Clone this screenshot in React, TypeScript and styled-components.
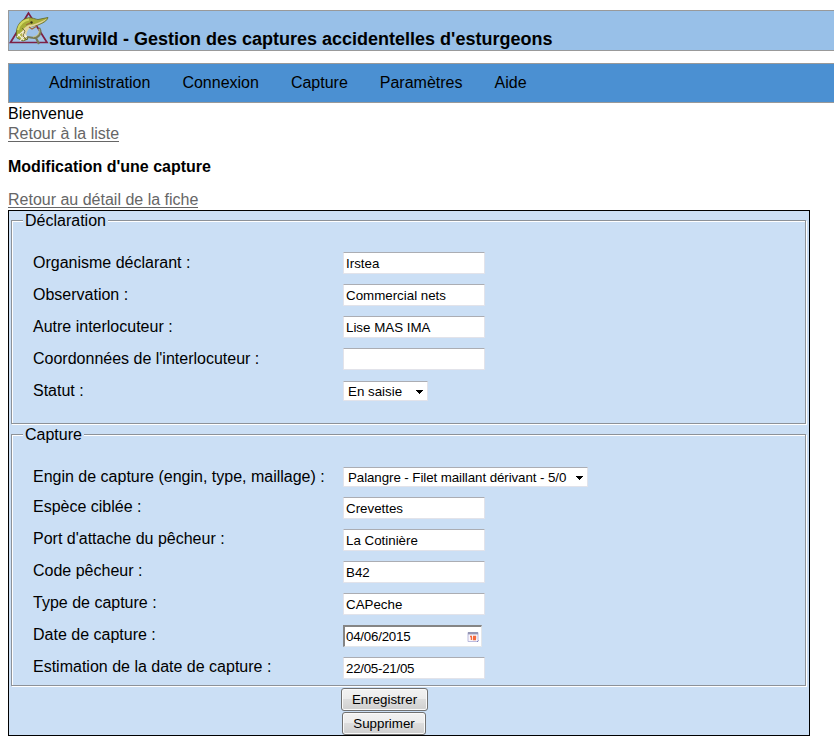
import React from "react";
import styled, { createGlobalStyle } from "styled-components";

const GlobalStyle = createGlobalStyle`
  * { box-sizing: border-box; }
  html, body { margin: 0; padding: 0; background: #fff; overflow: hidden; }
  body { font-family: "Liberation Sans", Arial, sans-serif; font-size: 16px; line-height: 20px; color: #000; }
`;

const Page = styled.div`
  display: flex;
  flex-direction: column;
  padding: 10px 0 0 8px;
`;

const Header = styled.header`
  display: flex;
  align-items: flex-start;
  height: 41px;
  background: #98c0e8;
  border: 1px solid #999;
  border-right: 0;
`;

const Logo = styled.svg`
  display: block;
  width: 40px;
  height: 35px;
  flex: none;
`;

const Title = styled.h1`
  margin: 17px 0 0;
  font-size: 18px;
  line-height: 22px;
  font-weight: bold;
  white-space: nowrap;
`;

const Menu = styled.nav`
  display: flex;
  gap: 32px;
  height: 40px;
  margin-top: 12px;
  padding: 9px 0 0 40px;
  background: #4b90d2;
  border: 1px solid #999;
  border-right: 0;
`;

const MenuItem = styled.span`
  white-space: nowrap;
`;

const Welcome = styled.div`
  margin-top: 1px;
`;

const BackLink = styled.a`
  align-self: flex-start;
  height: 18px;
  line-height: 20px;
  color: #666;
  border-bottom: 1px solid #666;
`;

const PageTitle = styled.h2`
  margin: 15px 0 13px;
  font-size: 16px;
  line-height: 20px;
  font-weight: bold;
`;

const FormBox = styled.form`
  display: flex;
  flex-direction: column;
  width: 802px;
  height: 526px;
  margin-top: 2px;
  padding: 9px 3px 0 2px;
  background: #cbdff5;
  border: 1px solid #000;
`;

const Section = styled.section<{ $height: number; $lift: number }>`
  height: ${(p) => p.$height}px;
  width: 795px;
  margin-bottom: 10px;
  padding-left: 11px;
  border: 1px solid #8d9298;
  box-shadow: 1px 1px 0 #fff, inset 1px 1px 0 #fff;
  --lift: ${(p) => p.$lift}px;
`;

const Legend = styled.div`
  width: fit-content;
  height: 20px;
  margin: -10px 0 0;
  padding: 0 2px;
  background: #cbdff5;
`;

const Fields = styled.div<{ $top: number }>`
  padding: ${(p) => p.$top}px 0 0 10px;
`;

const Row = styled.div<{ $height?: number }>`
  display: grid;
  grid-template-columns: 310px auto;
  align-items: center;
  justify-content: start;
  height: ${(p) => p.$height ?? 32}px;
`;

const Label = styled.label<{ $level?: boolean }>`
  white-space: nowrap;
  margin-bottom: ${(p) => (p.$level ? "0" : "var(--lift)")};
`;

const Input = styled.input<{ $tight?: boolean }>`
  width: 142px;
  height: 22px;
  padding: 1px 2px 0;
  font: 13.333px "Liberation Sans", Arial, sans-serif;
  letter-spacing: ${(p) => (p.$tight ? "-0.27px" : "normal")};
  color: #000;
  background: #fff;
  border: 1px solid #e2e3ea;
  border-top-color: #abadb3;
  border-radius: 1px;
  outline: none;
`;

const DateBox = styled.div`
  display: flex;
  align-items: center;
  justify-content: space-between;
  width: 139px;
  height: 22px;
  padding: 0 2px 0 1px;
  font-size: 13.333px;
  letter-spacing: -0.23px;
  background: #fff;
  border: 2px solid #e2e6ea;
  border-width: 2px 1px 1px 2px;
  border-top-color: #858585;
  border-left-color: #858585;
`;

const Select = styled.div<{ $width: number }>`
  display: flex;
  align-items: center;
  justify-content: space-between;
  width: ${(p) => p.$width}px;
  height: 20px;
  padding: 1px 4px 0;
  font-size: 13.333px;
  letter-spacing: ${(p) => (p.$width > 100 ? "-0.08px" : "normal")};
  white-space: nowrap;
  background: #fff;
  border: 1px solid #e2e3ea;
  border-top-color: #abadb3;
  border-radius: 1px;
`;

const Actions = styled.div`
  display: flex;
  flex-direction: column;
  align-items: flex-start;
  gap: 1px;
  margin-top: -8px;
  padding-left: 330px;
`;

const Button = styled.button<{ $width: number; $indent?: number }>`
  width: ${(p) => p.$width}px;
  height: 23px;
  margin-left: ${(p) => p.$indent ?? 0}px;
  padding: 0;
  font: 13.333px "Liberation Sans", Arial, sans-serif;
  color: #000;
  background: linear-gradient(#f2f2f2 0%, #ebebeb 49%, #dddddd 50%, #cfcfcf 100%);
  border: 1px solid #707070;
  border-radius: 3px;
  box-shadow: inset 0 0 0 1px #fafafa;
`;

const Arrow = () => (
  <svg width="7" height="4" viewBox="0 0 7 4" shapeRendering="crispEdges">
    <path d="M0 0H7V1H6V2H5V3H4V4H3V3H2V2H1V1H0Z" fill="#000" />
  </svg>
);

const Calendar = () => (
  <svg width="12" height="12" viewBox="0 0 12 12">
    <path d="M1 1.5H11V10.5H1Z" fill="#f8f5fb" stroke="#b4b4da" strokeWidth="0.9" />
    <path d="M1 1H11V3.4H1Z" fill="#9496b4" />
    <path d="M3 5.5H4.4V9M6 5.5H8.5V7H6.5V8.5H9" fill="none" stroke="#f46a3c" strokeWidth="1.3" />
    <path d="M10 11L11.5 9.5" stroke="#8080bd" />
  </svg>
);

const SturgeonLogo = () => (
  <Logo viewBox="0 0 40 35">
    <path d="M19.5 2L1.5 31.5H38Z" fill="#a0c2e6" stroke="#7d2045" strokeWidth="1.7" />
    <path d="M8 27C6 19 9 11 16 8C21 5 25 8 29 8.5L39 6.5C38 10 34 12 29 14C25 15 21 15 18 18C15 22 16 25 19 28L14 30Z" fill="#a7ad38" stroke="#5d6425" strokeWidth="0.8" />
    <path d="M20 14C25 14 32 11 38 7.5C35 11.5 28 14 22 16C18 19 16 24 18 28L13 26C12 20 15 16 20 14Z" fill="#e2d49c" />
    <path d="M9 19C10 13 15 9 20 8.5" fill="none" stroke="#d2d860" strokeWidth="2.2" />
    <path d="M8 26C11 23 13 20 16 20M11 30C15 24 18 25 21 27M9 23L15 29M13 21L18 26" fill="none" stroke="#f5efd8" strokeWidth="1.1" />
    <path d="M13 17L16 20L14 25L18 29" fill="none" stroke="#625c32" strokeWidth="0.8" />
    <path d="M30 17C33 21 31 26 25 27L18 26M27 27L30 33" fill="none" stroke="#777a55" strokeWidth="2.2" />
    <path d="M30 18C31 22 29 25 24 26" fill="none" stroke="#cfc47d" strokeWidth="1" />
    <circle cx="22.5" cy="11.5" r="1.2" fill="#353515" />
    <path d="M17 14L21 12M20 16L23 18L28 15" fill="none" stroke="#9c683a" strokeWidth="1.2" />
  </Logo>
);

type Field = {
  label: string;
  value: string;
  kind?: "select" | "date";
  width?: number;
  height?: number;
  level?: boolean;
  tight?: boolean;
};

const declaration: Field[] = [
  { label: "Organisme déclarant :", value: "Irstea" },
  { label: "Observation :", value: "Commercial nets" },
  { label: "Autre interlocuteur :", value: "Lise MAS IMA" },
  { label: "Coordonnées de l'interlocuteur :", value: "" },
  { label: "Statut :", value: "En saisie", kind: "select", width: 85 },
];

const capture: Field[] = [
  { label: "Engin de capture (engin, type, maillage) :", value: "Palangre - Filet maillant dérivant - 5/0", kind: "select", width: 245, height: 30, level: true },
  { label: "Espèce ciblée :", value: "Crevettes" },
  { label: "Port d'attache du pêcheur :", value: "La Cotinière" },
  { label: "Code pêcheur :", value: "B42" },
  { label: "Type de capture :", value: "CAPeche" },
  { label: "Date de capture :", value: "04/06/2015", kind: "date" },
  { label: "Estimation de la date de capture :", value: "22/05-21/05", tight: true },
];

const FieldRow = ({ label, value, kind, width, height, level, tight }: Field) => (
  <Row $height={height}>
    <Label $level={level}>{label}</Label>
    {kind === "select" ? (
      <Select $width={width ?? 85}><span>{value}</span><Arrow /></Select>
    ) : kind === "date" ? (
      <DateBox><span>{value}</span><Calendar /></DateBox>
    ) : (
      <Input defaultValue={value} $tight={tight} />
    )}
  </Row>
);

export default function App() {
  return (
    <>
      <GlobalStyle />
      <Page>
        <Header>
          <SturgeonLogo />
          <Title>sturwild - Gestion des captures accidentelles d'esturgeons</Title>
        </Header>
        <Menu>
          {["Administration", "Connexion", "Capture", "Paramètres", "Aide"].map((m) => (
            <MenuItem key={m}>{m}</MenuItem>
          ))}
        </Menu>
        <Welcome>Bienvenue</Welcome>
        <BackLink>Retour à la liste</BackLink>
        <PageTitle>Modification d'une capture</PageTitle>
        <BackLink>Retour au détail de la fiche</BackLink>
        <FormBox>
          <Section $height={204} $lift={0}>
            <Legend>Déclaration</Legend>
            <Fields $top={16}>
              {declaration.map((f) => <FieldRow key={f.label} {...f} />)}
            </Fields>
          </Section>
          <Section $height={252} $lift={3}>
            <Legend>Capture</Legend>
            <Fields $top={17}>
              {capture.map((f) => <FieldRow key={f.label} {...f} />)}
            </Fields>
          </Section>
          <Actions>
            <Button type="button" $width={87}>Enregistrer</Button>
            <Button type="button" $width={84} $indent={1}>Supprimer</Button>
          </Actions>
        </FormBox>
      </Page>
    </>
  );
}
